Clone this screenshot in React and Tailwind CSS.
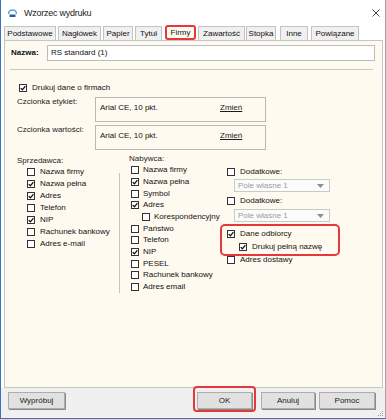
import React from "react";

function Box({ checked }) {
  return (
    <svg className="shrink-0 block" width="8" height="8" viewBox="0 0 8 8">
      <rect x="0.5" y="0.5" width="7" height="7" fill="#ffffff" stroke="#333333" strokeWidth="1" />
      {checked && (
        <path d="M1.7 4.1 L3.4 5.8 L6.4 2.1" stroke="#111" strokeWidth="1.3" fill="none" />
      )}
    </svg>
  );
}

function Cb({ label, checked, cls }) {
  return (
    <div className={cls}>
      <Box checked={checked} />
      <span className="whitespace-nowrap leading-[10px]">{label}</span>
    </div>
  );
}

function Drop() {
  return (
    <div className="w-[96px] h-[13px] border border-[#c9c9c9] bg-[#fbfbfb] flex items-center pl-[3px] pr-[5px] text-[#9c9c9c]">
      <span className="leading-[10px]">Pole własne 1</span>
      <svg className="ml-auto" width="7" height="4" viewBox="0 0 7 4">
        <path d="M0 0 L7 0 L3.5 4 Z" fill="#8e8e8e" />
      </svg>
    </div>
  );
}

function Btn({ label, cls }) {
  return (
    <div className={cls}>
      <span className="leading-[10px] text-[#222]">{label}</span>
    </div>
  );
}

const tabs = [
  { t: "Podstawowe", c: "w-[52px] h-[14px] bg-[#f0f0f0] border border-b-0 border-[#c3c3c3] flex items-center justify-center" },
  { t: "Nagłówek", c: "ml-[2px] w-[43px] h-[14px] bg-[#f0f0f0] border border-b-0 border-[#c3c3c3] flex items-center justify-center" },
  { t: "Papier", c: "ml-[2px] w-[30px] h-[14px] bg-[#f0f0f0] border border-b-0 border-[#c3c3c3] flex items-center justify-center" },
  { t: "Tytuł", c: "ml-[2px] w-[27px] h-[14px] bg-[#f0f0f0] border border-b-0 border-[#c3c3c3] flex items-center justify-center" },
  { t: "Firmy", c: "ml-[3px] w-[31px] h-[15px] -mt-[1px] bg-[#fffaf0] border-2 border-[#e5383b] rounded-[3px] flex items-center justify-center" },
  { t: "Zawartość", c: "ml-[2px] w-[47px] h-[14px] bg-[#f0f0f0] border border-b-0 border-[#c3c3c3] flex items-center justify-center" },
  { t: "Stopka", c: "ml-[1px] w-[30px] h-[14px] bg-[#f0f0f0] border border-b-0 border-[#c3c3c3] flex items-center justify-center" },
  { t: "Inne", c: "ml-[4px] w-[28px] h-[14px] bg-[#f0f0f0] border border-b-0 border-[#c3c3c3] flex items-center justify-center" },
  { t: "Powiązane", c: "ml-[3px] w-[48px] h-[14px] bg-[#f0f0f0] border border-b-0 border-[#c3c3c3] flex items-center justify-center" },
];

const row1 = "h-[12px] flex items-center pl-[10px] gap-[5px]";
const rowA = "h-[12px] flex items-center pl-[2px] gap-[4px]";
const rowB = "h-[11px] flex items-center pl-[2px] gap-[4px]";
const rowI = "h-[12px] flex items-center pl-[13px] gap-[4px]";

export default function App() {
  return (
    <div className="w-[386px] h-[419px] flex flex-col bg-white border-l border-l-[#3b73b9] border-r border-r-[#a3a3a3] border-b border-b-[#3b73b9] font-['Liberation_Sans',Arial,sans-serif] text-[8px] text-[#111] overflow-hidden">
      {/* title bar */}
      <div className="h-[26px] flex items-center shrink-0">
        <svg className="ml-[7px]" width="9" height="9" viewBox="0 0 9 9">
          <path d="M0.5 5 A4 4 0 0 1 8.5 5" stroke="#5aa8d8" strokeWidth="1.6" fill="none" />
          <rect x="1.5" y="5.5" width="6" height="2.5" fill="#2c5f9a" />
        </svg>
        <span className="ml-[7px] text-[9px] tracking-[-0.25px] text-[#222] leading-[12px]">Wzorzec wydruku</span>
        <svg className="ml-auto mr-[5px]" width="8" height="8" viewBox="0 0 8 8">
          <path d="M0.5 0.5 L7.5 7.5 M7.5 0.5 L0.5 7.5" stroke="#333" strokeWidth="0.9" />
        </svg>
      </div>

      {/* tabs */}
      <div className="h-[14px] flex items-end pl-[3px] shrink-0">
        {tabs.map((tb) => (
          <div key={tb.t} className={tb.c}>
            <span className="leading-[10px] whitespace-nowrap">{tb.t}</span>
          </div>
        ))}
      </div>

      {/* panel */}
      <div className="ml-[3px] w-[379px] h-[348px] bg-[#fffaf0] border border-[#c6c6c6] flex flex-col shrink-0">
        <div className="mt-[4px] h-[16px] flex items-center">
          <div className="w-[42px] pl-[6px] font-bold leading-[10px]">Nazwa:</div>
          <div className="w-[328px] h-[16px] bg-white border border-[#bcbcbc] pl-[3px] flex items-center">
            <span className="leading-[10px]">RS standard (1)</span>
          </div>
        </div>
        <div className="mt-[8px] ml-[5px] w-[363px] h-px bg-[#c9c9c9]" />

        <Cb cls="mt-[13px] h-[10px] flex items-center pl-[14px] gap-[5px]" label="Drukuj dane o firmach" checked />

        <div className="mt-[4px] flex items-start pl-[12px]">
          <div className="w-[78px] leading-[10px] text-[#222]">Czcionka etykiet:</div>
          <div className="w-[171px] h-[25px] border border-[#b8b8b8] pl-[4px] pt-[5px] flex items-start">
            <span className="w-[120px] leading-[10px]">Arial CE, 10 pkt.</span>
            <span className="leading-[10px] underline text-[#1a1a1a]">Zmień</span>
          </div>
        </div>
        <div className="mt-[3px] flex items-start pl-[12px]">
          <div className="w-[78px] leading-[10px] text-[#222]">Czcionka wartości:</div>
          <div className="w-[171px] h-[25px] border border-[#b8b8b8] pl-[4px] pt-[5px] flex items-start">
            <span className="w-[120px] leading-[10px]">Arial CE, 10 pkt.</span>
            <span className="leading-[10px] underline text-[#1a1a1a]">Zmień</span>
          </div>
        </div>

        {/* columns */}
        <div className="flex items-start">
          <div className="ml-[12px] w-[102px] shrink-0 flex flex-col">
            <div className="mt-[6px] h-[10px] leading-[10px] text-[#222]">Sprzedawca:</div>
            <Cb cls={row1} label="Nazwa firmy" />
            <Cb cls={row1} label="Nazwa pełna" checked />
            <Cb cls={row1} label="Adres" checked />
            <Cb cls={row1} label="Telefon" />
            <Cb cls={row1} label="NIP" checked />
            <Cb cls={row1} label="Rachunek bankowy" />
            <Cb cls={row1} label="Adres e-mail" />
          </div>
          <div className="w-px h-[120px] mt-[23px] shrink-0 bg-[#c4c4c4]" />
          <div className="ml-[9px] w-[98px] shrink-0 flex flex-col">
            <div className="mt-[4px] h-[10px] leading-[10px] text-[#222]">Nabywca:</div>
            <Cb cls={rowA} label="Nazwa firmy" />
            <Cb cls={rowA} label="Nazwa pełna" checked />
            <Cb cls={rowB} label="Symbol" />
            <Cb cls={rowA} label="Adres" checked />
            <Cb cls={rowI} label="Korespondencyjny" />
            <Cb cls={rowB} label="Państwo" />
            <Cb cls={rowA} label="Telefon" />
            <Cb cls={rowA} label="NIP" checked />
            <Cb cls={rowB} label="PESEL" />
            <Cb cls={rowA} label="Rachunek bankowy" />
            <Cb cls={rowB} label="Adres email" />
          </div>
          <div className="flex flex-col">
            <Cb cls="mt-[17px] h-[10px] flex items-center gap-[5px]" label="Dodatkowe:" />
            <div className="mt-[2px] ml-[7px]"><Drop /></div>
            <Cb cls="mt-[4px] h-[10px] flex items-center gap-[5px]" label="Dodatkowe:" />
            <div className="mt-[3px] ml-[7px]"><Drop /></div>
            <div className="relative mt-[5px] flex flex-col">
              <Cb cls="h-[13px] flex items-center gap-[5px]" label="Dane odbiorcy" checked />
              <Cb cls="h-[14px] flex items-center pl-[12px] gap-[5px]" label="Drukuj pełną nazwę" checked />
              <span className="absolute -left-[7px] -top-[3px] w-[120px] h-[32px] border-2 border-[#e5383b] rounded-[5px]" />
            </div>
            <Cb cls="mt-[1px] h-[10px] flex items-center gap-[5px]" label="Adres dostawy" />
          </div>
        </div>
      </div>

      {/* footer */}
      <div className="flex-1 bg-[#f0f0f0] flex items-start pt-[4px]">
        <Btn label="Wypróbuj" cls="ml-[7px] w-[57px] h-[17px] bg-[#e1e1e1] border border-[#adadad] shadow-[1px_1px_0_#8a8a8a] flex items-center justify-center" />
        <div className="relative ml-[132px]">
          <Btn label="OK" cls="w-[55px] h-[17px] bg-[#e1e1e1] border border-[#adadad] shadow-[1px_1px_0_#8a8a8a] flex items-center justify-center" />
          <span className="absolute -left-[4px] -top-[6px] w-[63px] h-[26px] border-2 border-[#e5383b] rounded-[4px]" />
        </div>
        <Btn label="Anuluj" cls="ml-[9px] w-[54px] h-[17px] bg-[#e1e1e1] border border-[#adadad] shadow-[1px_1px_0_#8a8a8a] flex items-center justify-center" />
        <Btn label="Pomoc" cls="ml-[4px] w-[56px] h-[17px] bg-[#e1e1e1] border border-[#adadad] shadow-[1px_1px_0_#8a8a8a] flex items-center justify-center" />
        <svg className="ml-auto self-end mb-[1px] mr-[1px]" width="7" height="7" viewBox="0 0 7 7">
          <rect x="5" y="1" width="1" height="1" fill="#a0a0a0" />
          <rect x="3" y="3" width="1" height="1" fill="#a0a0a0" />
          <rect x="5" y="3" width="1" height="1" fill="#a0a0a0" />
          <rect x="1" y="5" width="1" height="1" fill="#a0a0a0" />
          <rect x="3" y="5" width="1" height="1" fill="#a0a0a0" />
          <rect x="5" y="5" width="1" height="1" fill="#a0a0a0" />
        </svg>
      </div>
    </div>
  );
}
